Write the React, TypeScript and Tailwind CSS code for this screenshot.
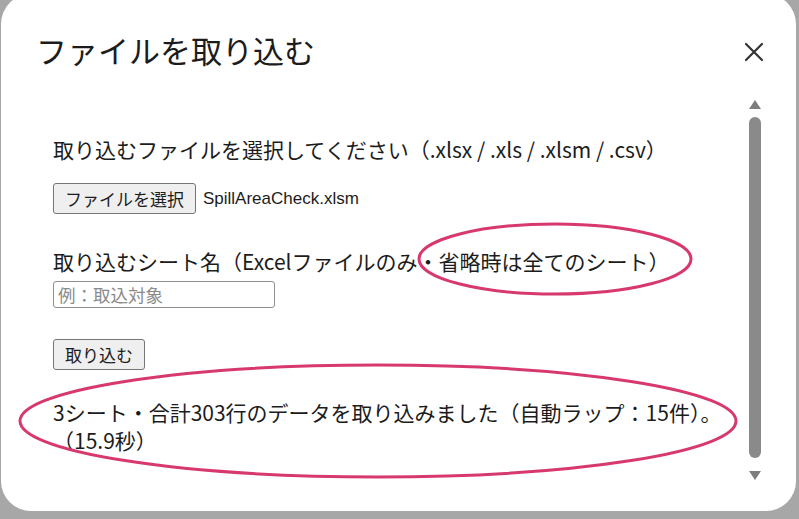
import { useState } from 'react'

const jp = "font-['Noto_Sans_CJK_JP','Noto_Sans',sans-serif]"

function CloseIcon() {
  return (
    <svg width="20" height="20" viewBox="0 0 20 20" className="text-[#333]">
      <path d="M2 2 L18 18 M18 2 L2 18" stroke="currentColor" strokeWidth="2.2" strokeLinecap="round" />
    </svg>
  )
}

function FakeScrollbar() {
  return (
    <div className="flex w-[13px] flex-col items-center">
      <div className="mt-[4px] h-0 w-0 border-x-[6px] border-b-[9px] border-x-transparent border-b-[#7d7d7d]" />
      <div className="mt-[8px] h-[341px] w-[12px] rounded-full bg-[#8a8a8a]" />
      <div className="mt-[13px] h-0 w-0 border-x-[6px] border-t-[9px] border-x-transparent border-t-[#7d7d7d]" />
    </div>
  )
}

export default function App() {
  const [sheet, setSheet] = useState('')

  return (
    <div className={`relative h-[519px] w-[799px] overflow-hidden bg-[#a7a7a7] ${jp} text-[#1c1c1c]`}>
      <div className="ml-[1px] mr-[3px] mt-[-6px] flex h-[517px] flex-col rounded-[30px] bg-white">
        {/* header */}
        <div className="flex items-center justify-between pl-[35px] pr-[30px] pt-[36px]">
          <h2 className="h-[40px] text-[31px] leading-[40px] font-normal">ファイルを取り込む</h2>
          <button className="mt-[4px] flex h-[24px] w-[24px] items-center justify-center">
            <CloseIcon />
          </button>
        </div>

        {/* body */}
        <div className="mt-[26px] flex flex-1 pr-[35px]">
          <div className="flex flex-1 flex-col pl-[52px] pt-[38px]">
            <p className="text-[21px] leading-[30px]">
              取り込むファイルを選択してください（.xlsx / .xls / .xlsm / .csv）
            </p>

            <div className="mt-[19px] flex items-center gap-[7px]">
              <button className="h-[31px] rounded-[3px] border border-[#767676] bg-[#efefef] px-[11px] text-[17px] leading-none">
                ファイルを選択
              </button>
              <span className="font-['Liberation_Sans',Arial,sans-serif] text-[17px]">SpillAreaCheck.xlsm</span>
            </div>

            <p className="mt-[32px] text-[21px] leading-[30px]">
              取り込むシート名（Excelファイルのみ・省略時は全てのシート）
            </p>
            <input
              value={sheet}
              onChange={(e) => setSheet(e.target.value)}
              placeholder="例：取込対象"
              className="mt-[5px] h-[27px] w-[222px] rounded-[3px] border border-[#8f8f8f] px-[4px] text-[17.5px] placeholder:text-[#8a8a8a]"
            />

            <div className="mt-[31px]">
              <button className="h-[31px] rounded-[3px] border border-[#767676] bg-[#efefef] px-[11px] text-[17px] leading-none">
                取り込む
              </button>
            </div>

            <p className="mt-[28px] text-[21px] leading-[28px]">
              3シート・合計303行のデータを取り込みました（自動ラップ：15件）。
              <br />
              （15.9秒）
            </p>
          </div>
          <FakeScrollbar />
        </div>
      </div>

      {/* annotation marks */}
      <svg className="pointer-events-none absolute inset-0" width="799" height="519" viewBox="0 0 799 519">
        <ellipse cx="555" cy="259" rx="136" ry="35" fill="none" stroke="#d8396d" strokeWidth="3" />
        <ellipse cx="378" cy="421" rx="358" ry="56" fill="none" stroke="#d8396d" strokeWidth="3" />
      </svg>
    </div>
  )
}
